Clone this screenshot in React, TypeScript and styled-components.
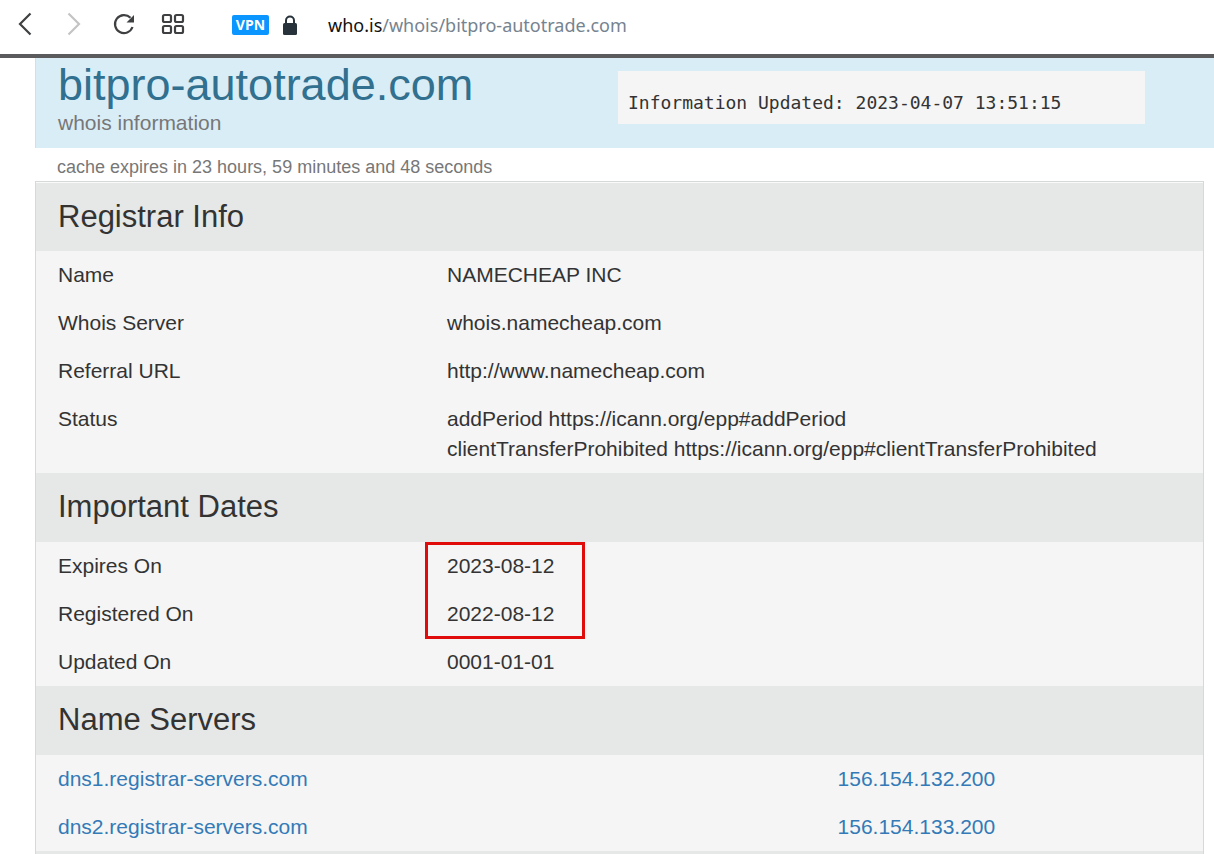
import React from "react";
import styled, { createGlobalStyle } from "styled-components";

const GlobalStyle = createGlobalStyle`
  *, *::before, *::after { box-sizing: border-box; }
  body {
    margin: 0;
    background: #fff;
    color: #333;
    font-family: "Liberation Sans", Arial, sans-serif;
    font-size: 21px;
    line-height: 30px;
  }
  h1, h2, p, dl, dd, pre { margin: 0; font-weight: 400; }
`;

const Window = styled.div`
  display: flex;
  flex-direction: column;
  min-height: 100vh;
`;

const Toolbar = styled.header`
  display: flex;
  align-items: center;
  height: 58px;
  padding: 0 12px 4px;
  border-bottom: 4px solid #5b5a5c;
`;

const NavButtons = styled.nav`
  display: flex;
  gap: 21px;
`;

const IconButton = styled.button`
  display: block;
  width: 28px;
  height: 28px;
  padding: 0;
  border: 0;
  background: none;
  color: ${(p) => (p.disabled ? "#c4c4c4" : "#3f4042")};
`;

const Icon = styled.svg.attrs({ viewBox: "0 1 28 28", width: 28, height: 28 })`
  display: block;
  fill: none;
  stroke: currentColor;
  stroke-width: 2.2px;
`;

const AddressBar = styled.div`
  display: flex;
  align-items: center;
  margin-left: 45px;
`;

const VpnBadge = styled.button`
  width: 37px;
  height: 20px;
  padding: 0;
  border: 0;
  border-radius: 2px;
  background: #0a95ff;
  color: #fff;
  font: 700 14px/20px "Open Sans", sans-serif;
`;

const LockIcon = styled.svg`
  margin: 0 31px 0 14px;
`;

const Url = styled.a`
  color: #768390;
  font: 400 18px/28px "Noto Sans", sans-serif;
  text-decoration: none;
`;

const Host = styled.span`
  color: #111;
`;

const Page = styled.main`
  display: flex;
  flex: 1;
  flex-direction: column;
  padding-left: 35px;
`;

const Banner = styled.section`
  display: grid;
  grid-template-columns: 17fr 16fr;
  align-items: start;
  height: 90px;
  padding: 4px 69px 0 22px;
  border-left: 1px solid #c4e6ea;
  background: #d9edf7;
`;

const Domain = styled.h1`
  color: #31708f;
  font-size: 45px;
  line-height: 46px;
`;

const Subtitle = styled.p`
  color: #777;
`;

const Updated = styled.pre`
  margin-top: 9px;
  padding: 17px 10px 6px;
  background: #f5f5f5;
  font: 18px/30px "DejaVu Sans Mono", monospace;
`;

const CacheNote = styled.p`
  height: 33px;
  padding: 4px 22px 0;
  color: #777;
  font-size: 18px;
`;

const Panel = styled.div`
  display: flex;
  flex: 1;
  flex-direction: column;
  margin-right: 10px;
  border: 1px solid #d5d9d8;
  border-bottom: 0;
  background: #f5f5f5;
`;

const Heading = styled.h2<{ $first?: boolean }>`
  height: 69px;
  padding-left: 22px;
  border-top: ${(p) => (p.$first ? "1px solid #fafafa" : "0")};
  background: #e6e8e7;
  font-size: 31px;
  line-height: 68px;
`;

const Details = styled.dl`
  position: relative;
`;

const Row = styled.div`
  display: grid;
  grid-template-columns: 1fr 2fr;

  dt, dd { padding: 9px 22px; }
`;

const Highlight = styled.div`
  position: absolute;
  top: 0;
  left: 33.333%;
  width: 160px;
  height: 97px;
  border: 3px solid #e00b0b;
`;

const ServerTable = styled.table`
  width: 100%;
  table-layout: fixed;
  border-collapse: collapse;

  td { padding: 9px 22px; }
  td:first-child { width: 66.8%; }
`;

const Link = styled.a`
  color: #337ab7;
  text-decoration: none;
`;

const NextSection = styled.div`
  flex: 1;
  background: #e6e8e7;
`;

const registrar: [string, string[]][] = [
  ["Name", ["NAMECHEAP INC"]],
  ["Whois Server", ["whois.namecheap.com"]],
  ["Referral URL", ["http://www.namecheap.com"]],
  [
    "Status",
    [
      "addPeriod https://icann.org/epp#addPeriod",
      "clientTransferProhibited https://icann.org/epp#clientTransferProhibited",
    ],
  ],
];

const dates: [string, string[]][] = [
  ["Expires On", ["2023-08-12"]],
  ["Registered On", ["2022-08-12"]],
  ["Updated On", ["0001-01-01"]],
];

const servers = [
  ["dns1.registrar-servers.com", "156.154.132.200"],
  ["dns2.registrar-servers.com", "156.154.133.200"],
];

const Rows = ({ items }: { items: [string, string[]][] }) => (
  <>
    {items.map(([label, lines]) => (
      <Row key={label}>
        <dt>{label}</dt>
        <dd>
          {lines.map((line) => (
            <div key={line}>{line}</div>
          ))}
        </dd>
      </Row>
    ))}
  </>
);

export default function App() {
  return (
    <>
      <GlobalStyle />
      <Window>
        <Toolbar>
          <NavButtons aria-label="Browser">
            <IconButton aria-label="Back">
              <Icon>
                <path d="M18.500 3.500 8 14l10.500 10.500" />
              </Icon>
            </IconButton>
            <IconButton aria-label="Forward" disabled>
              <Icon>
                <path d="M7.500 3.500 18 14 7.500 24.500" />
              </Icon>
            </IconButton>
            <IconButton aria-label="Reload">
              <Icon>
                <path d="M20.500 7.800A9 9 0 1 0 22.500 17" />
                <path d="M24 5v7.500h-7.500z" fill="currentColor" stroke="none" />
              </Icon>
            </IconButton>
            <IconButton aria-label="Speed dial">
              <Icon>
                <rect x="4" y="5" width="8" height="7" rx="1.500" />
                <rect x="16" y="5" width="8" height="7" rx="1.500" />
                <rect x="4" y="16" width="8" height="7" rx="1.500" />
                <rect x="16" y="16" width="8" height="7" rx="1.500" />
              </Icon>
            </IconButton>
          </NavButtons>
          <AddressBar>
            <VpnBadge>VPN</VpnBadge>
            <LockIcon width="14" height="20" role="img" aria-label="Secure">
              <path d="M3 10V5.500a4 4 0 0 1 8 0V10" fill="none" stroke="#27323a" strokeWidth="2" />
              <rect y="8" width="14" height="12" rx="1.500" fill="#27323a" />
            </LockIcon>
            <Url href="#">
              <Host>who.is</Host>/whois/bitpro-autotrade.com
            </Url>
          </AddressBar>
        </Toolbar>
        <Page>
          <Banner>
            <div>
              <Domain>bitpro-autotrade.com</Domain>
              <Subtitle>whois information</Subtitle>
            </div>
            <Updated>Information Updated: 2023-04-07 13:51:15</Updated>
          </Banner>
          <CacheNote>cache expires in 23 hours, 59 minutes and 48 seconds</CacheNote>
          <Panel>
            <Heading $first>Registrar Info</Heading>
            <Details>
              <Rows items={registrar} />
            </Details>
            <Heading>Important Dates</Heading>
            <Details>
              <Rows items={dates} />
              <Highlight />
            </Details>
            <Heading>Name Servers</Heading>
            <ServerTable>
              <tbody>
                {servers.map(([name, ip]) => (
                  <tr key={name}>
                    <td><Link href="#">{name}</Link></td>
                    <td><Link href="#">{ip}</Link></td>
                  </tr>
                ))}
              </tbody>
            </ServerTable>
            <NextSection />
          </Panel>
        </Page>
      </Window>
    </>
  );
}
